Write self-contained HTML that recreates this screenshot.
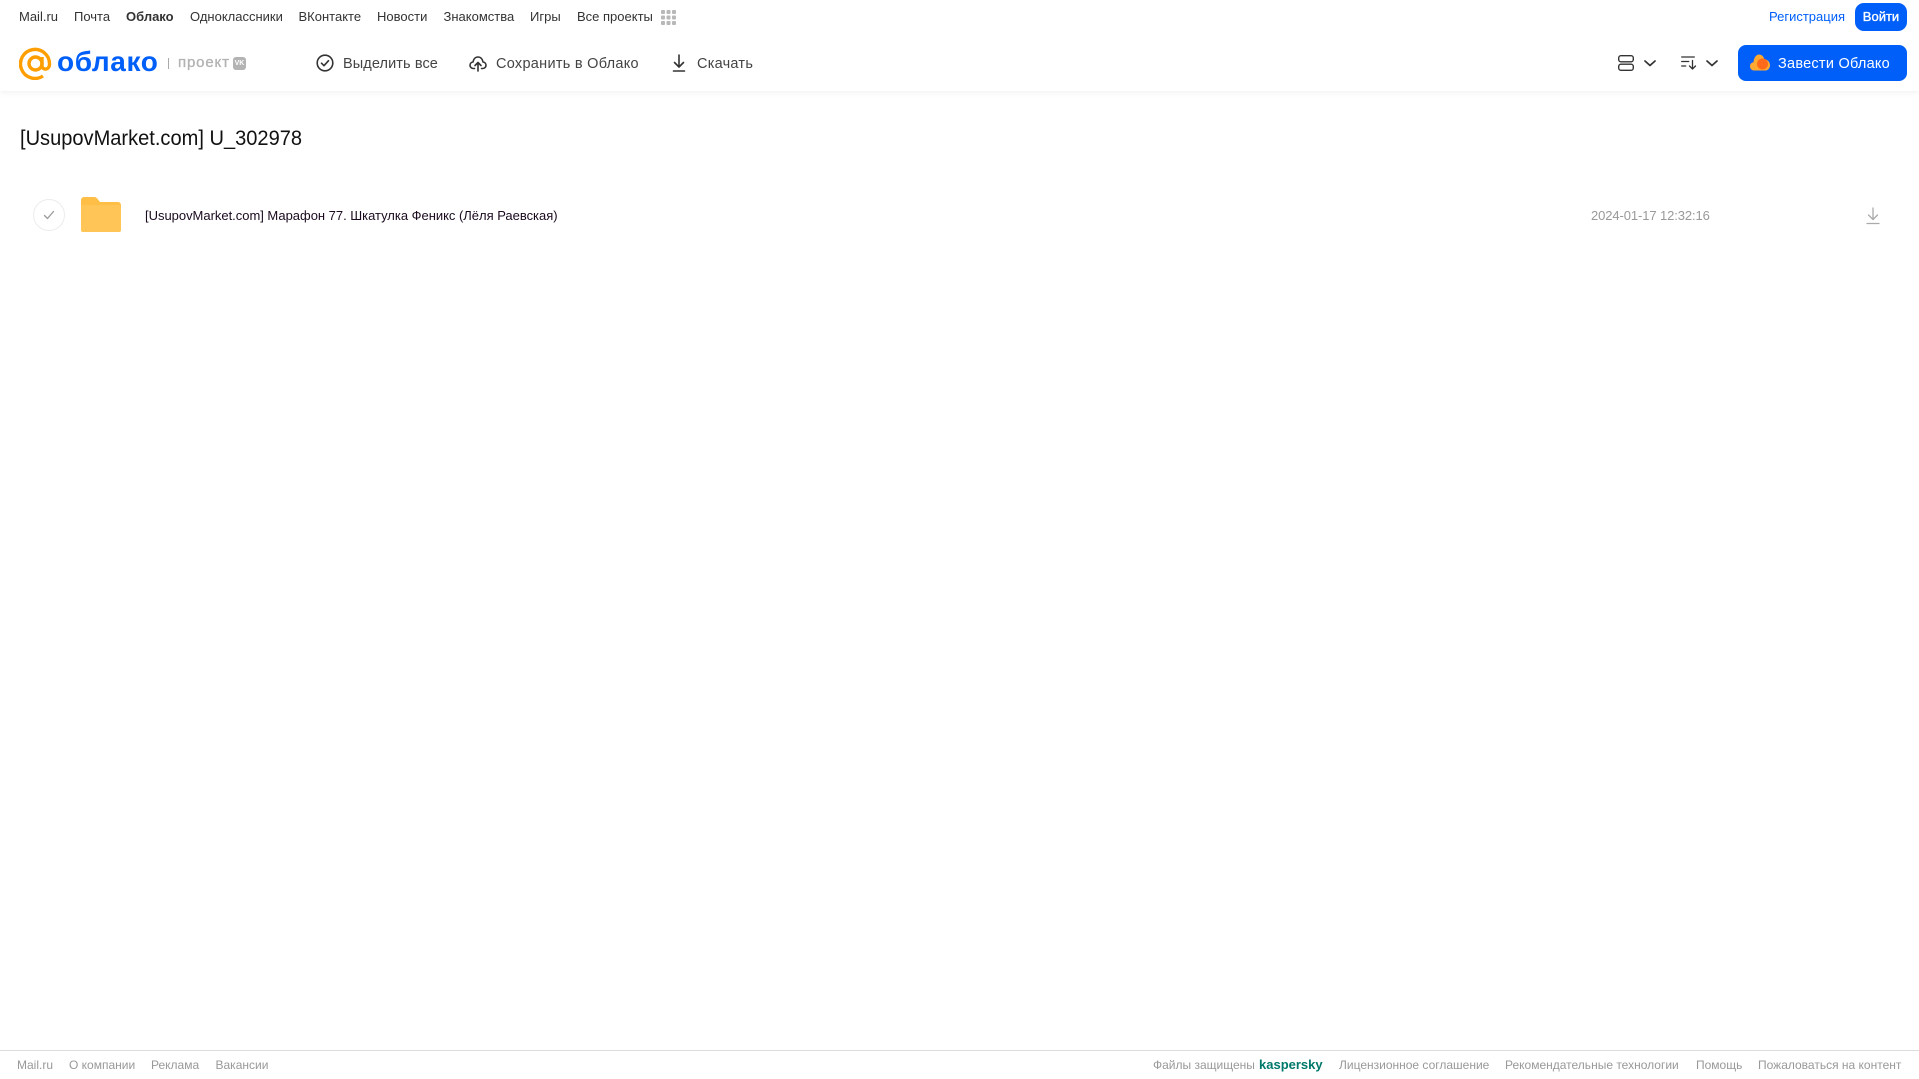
<!DOCTYPE html>
<html lang="ru"><head><meta charset="utf-8"><title>Облако</title>
<style>
html,body{margin:0;padding:0;background:#fff}
body{width:1919px;height:1079px;position:relative;overflow:hidden;font-family:"Liberation Sans",sans-serif}
.t{position:absolute;white-space:nowrap;line-height:20px}
.n{font-size:13px;color:#333;top:7px}
.b{font-size:14.5px;color:#444;top:54px;letter-spacing:.1px}
.f{font-size:12px;color:#999;top:1055px}
svg{position:absolute;display:block}
</style></head><body>
<div style="position:absolute;left:0;top:0;width:1919px;height:91px;background:#fff;box-shadow:0 1px 6px rgba(0,0,0,.07)"></div>

<span class="t n" style="left:19px">Mail.ru</span>
<span class="t n" style="left:74px">Почта</span>
<span class="t n" style="left:126px;font-weight:bold">Облако</span>
<span class="t n" style="left:190px">Одноклассники</span>
<span class="t n" style="left:298.500px">ВКонтакте</span>
<span class="t n" style="left:377px">Новости</span>
<span class="t n" style="left:443.500px">Знакомства</span>
<span class="t n" style="left:530px">Игры</span>
<span class="t n" style="left:577px">Все проекты</span>
<svg style="left:661px;top:10px" width="15" height="15" fill="#b8b8b8"><rect x="0" y="0" width="4" height="4" rx="1"/><rect x="5.500" y="0" width="4" height="4" rx="1"/><rect x="11" y="0" width="4" height="4" rx="1"/><rect x="0" y="5.500" width="4" height="4" rx="1"/><rect x="5.500" y="5.500" width="4" height="4" rx="1"/><rect x="11" y="5.500" width="4" height="4" rx="1"/><rect x="0" y="11" width="4" height="4" rx="1"/><rect x="5.500" y="11" width="4" height="4" rx="1"/><rect x="11" y="11" width="4" height="4" rx="1"/></svg>

<span class="t n" style="left:1769px;color:#005ff9">Регистрация</span>
<div style="position:absolute;left:1855px;top:3px;width:52px;height:28px;border-radius:9px;background:#005ff9"></div>
<span class="t n" style="left:1855px;width:52px;text-align:center;color:#fff;-webkit-text-stroke:.35px #fff">Войти</span>

<svg style="left:19px;top:47px" width="33" height="33" viewBox="0 0 33 33" fill="none" stroke="#ff9e00" stroke-width="3.400"><circle cx="16.500" cy="16.500" r="6.500"/><path d="M23 10v8.500c0 5 7.500 5 7.500-1.500A14.500 14.500 0 1 0 24 29"/></svg>
<span class="t" style="left:57px;top:46px;line-height:32px;font-size:28px;font-weight:bold;color:#005ff9;letter-spacing:.6px">облако</span>
<div style="position:absolute;left:168px;top:58px;width:1px;height:11px;background:#aaa"></div>
<span class="t" style="left:178px;top:53px;font-size:15px;color:#b3b3b3;letter-spacing:.85px;-webkit-text-stroke:.35px #b3b3b3">проект</span>
<div style="position:absolute;left:233px;top:57px;width:13px;height:13px;border-radius:3px;background:#b3b3b3;color:#fff;font-size:7px;line-height:13px;text-align:center;font-weight:bold">VK</div>

<svg style="left:316px;top:54px" width="18" height="18" viewBox="0 0 18 18" fill="none" stroke="#333" stroke-width="1.600"><circle cx="9" cy="9" r="7.800"/><path d="M5.500 9.200l2.500 2.500 4.500-5" stroke-linecap="round" stroke-linejoin="round"/></svg>
<span class="t b" style="left:343px">Выделить все</span>

<svg style="left:469px;top:54px" width="18" height="18" viewBox="0 0 18 18" fill="none" stroke="#333" stroke-width="1.600" stroke-linecap="round" stroke-linejoin="round"><path d="M5.500 14.500H4.500C2.500 14.500 1 13 1 11.200 1 9.500 2.300 8.200 4 8 4.500 5 6.500 3 9 3s4.500 2 5 5c1.700.2 3 1.500 3 3.200 0 1.800-1.500 3.300-3.500 3.300h-1"/><path d="M9 17V9M6 11.500L9 8.500l3 3"/></svg>
<span class="t b" style="left:496px;letter-spacing:.28px">Сохранить в Облако</span>

<svg style="left:670px;top:54px" width="18" height="18" viewBox="0 0 18 18" fill="none" stroke="#333" stroke-width="1.600" stroke-linecap="round" stroke-linejoin="round"><path d="M9 1v11.500M4.500 8.500L9 13l4.500-4.500M3.500 17h11"/></svg>
<span class="t b" style="left:697px;letter-spacing:.25px">Скачать</span>

<svg style="left:1618px;top:55px" width="16" height="16" viewBox="0 0 16 16" fill="none" stroke="#333" stroke-width="1.400"><rect x=".7" y=".7" width="14.600" height="6.100" rx="2.200"/><rect x=".7" y="9.200" width="14.600" height="6.100" rx="2.200"/></svg>
<svg style="left:1644px;top:60px" width="12" height="7" viewBox="0 0 12 7" fill="none" stroke="#333" stroke-width="1.700" stroke-linecap="round" stroke-linejoin="round"><path d="M1 1l5 4.500L11 1"/></svg>
<svg style="left:1681px;top:55px" width="16" height="16" viewBox="0 0 16 16" fill="none" stroke="#333" stroke-width="1.300" stroke-linecap="round" stroke-linejoin="round"><path d="M.7 2h12.600M.7 6.500h7M.7 11h4M11.500 5.500V14M8.500 11l3 3 3-3"/></svg>
<svg style="left:1706px;top:60px" width="12" height="7" viewBox="0 0 12 7" fill="none" stroke="#333" stroke-width="1.700" stroke-linecap="round" stroke-linejoin="round"><path d="M1 1l5 4.500L11 1"/></svg>

<div style="position:absolute;left:1738px;top:45px;width:169px;height:36px;border-radius:8px;background:#005ff9"></div>
<svg style="left:1750px;top:54px" width="20" height="17" viewBox="0 0 20 17"><path d="M4 16.500C1.500 16.500 0 14.500 0 12.300 0 10 1.600 8.600 3.500 8.300 3.800 4 6 .5 9 .5c2.800 0 4.500 2 5.200 4.500C17.500 5.500 20 8 20 11.200c0 3-2 5.300-5 5.300z" fill="#ffa930"/><circle cx="12.500" cy="10" r="5.500" fill="#ff6a1a"/></svg>
<span class="t b" style="left:1778px;color:#fff;letter-spacing:.25px">Завести Облако</span>

<span class="t" style="left:20px;top:127px;line-height:24px;font-size:21px;color:#111;transform:scaleX(.955);transform-origin:0 50%">[UsupovMarket.com] U_302978</span>

<div style="position:absolute;left:33px;top:199px;width:30px;height:30px;border:1px solid #ececec;border-radius:50%"></div>
<svg style="left:43px;top:210px" width="12" height="10" viewBox="0 0 12 10" fill="none" stroke="#999" stroke-width="1.300" stroke-linecap="round" stroke-linejoin="round"><path d="M1.500 5.500l3 3 6-7"/></svg>
<svg style="left:81px;top:197px" width="40" height="35" viewBox="0 0 40 35"><path d="M0 3a3 3 0 0 1 3-3h10c2 0 3 1 4 2.500L19 5h18a3 3 0 0 1 3 3v24a3 3 0 0 1-3 3H3a3 3 0 0 1-3-3z" fill="#ffbf47"/><rect x="0" y="8" width="40" height="27" rx="2" fill="#ffc557"/></svg>
<span class="t" style="left:145px;top:206px;font-size:13px;color:#1a0a1f;letter-spacing:-.02px">[UsupovMarket.com] Марафон 77. Шкатулка Феникс (Лёля Раевская)</span>
<span class="t" style="left:1591px;top:206px;font-size:13px;color:#999;letter-spacing:-.1px">2024-01-17 12:32:16</span>
<svg style="left:1866px;top:207px" width="14" height="18" viewBox="0 0 14 18" fill="none" stroke="#aaa" stroke-width="1.300" stroke-linecap="round" stroke-linejoin="round"><path d="M7 1v11M2.500 8L7 12.500 11.500 8M1 16.500h12"/></svg>

<div style="position:absolute;left:0;top:1050px;width:1919px;height:1px;background:#ddd"></div>
<span class="t f" style="left:17px">Mail.ru</span>
<span class="t f" style="left:69px">О компании</span>
<span class="t f" style="left:151px">Реклама</span>
<span class="t f" style="left:215.500px">Вакансии</span>
<span class="t f" style="left:1153px">Файлы защищены</span>
<span class="t f" style="left:1259px;color:#00796b;font-weight:bold;font-size:13px">kaspersky</span>
<span class="t f" style="left:1339px">Лицензионное соглашение</span>
<span class="t f" style="left:1505px">Рекомендательные технологии</span>
<span class="t f" style="left:1696px">Помощь</span>
<span class="t f" style="left:1758px">Пожаловаться на контент</span>
</body></html>
